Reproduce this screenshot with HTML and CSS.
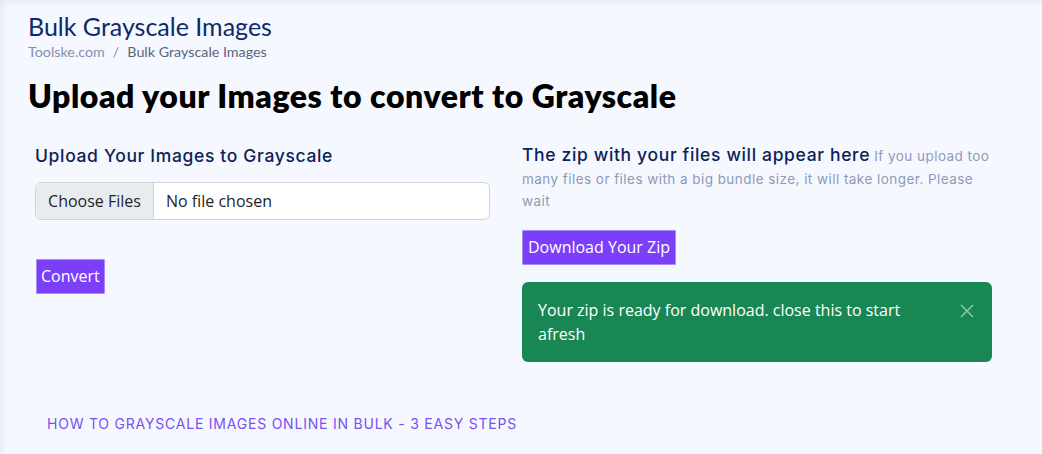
FILE: index.html
```html
<!DOCTYPE html>
<html lang="en">
<head>
<meta charset="utf-8">
<title>Bulk Grayscale Images</title>
<link rel="stylesheet" href="styles.css">
</head>
<body>
<div class="page">
  <header class="page-head">
    <div class="site-title">Bulk Grayscale Images</div>
    <nav class="crumbs"><span class="crumb-link">Toolske.com</span><span class="crumb-sep">/</span><span class="crumb-current">Bulk Grayscale Images</span></nav>
  </header>
  <h1 class="main-title">Upload your Images to convert to Grayscale</h1>
  <div class="tool">
    <section class="col-left">
      <h2 class="sub-title">Upload Your Images to Grayscale</h2>
      <div class="file-input"><span class="file-btn">Choose Files</span><span class="file-name">No file chosen</span></div>
      <button class="btn btn-convert">Convert</button>
    </section>
    <section class="col-right">
      <p class="zip-text"><span class="sub-title inline">The zip with your files will appear here</span> <span class="note">If you upload too many files or files with a big bundle size, it will take longer. Please wait</span></p>
      <button class="btn btn-download">Download Your Zip</button>
      <div class="alert">
        <span class="alert-text">Your zip is ready for download. close this to start afresh</span>
        <svg class="alert-close" width="14" height="14" viewBox="0 0 14 14"><path d="M1 1L13 13M13 1L1 13" stroke="currentColor" stroke-width="1.6" fill="none"/></svg>
      </div>
    </section>
  </div>
  <div class="steps-title">HOW TO GRAYSCALE IMAGES ONLINE IN BULK - 3 EASY STEPS</div>
</div>
</body>
</html>
```
FILE: styles.css
```css
html, body { margin: 0; padding: 0; }
body {
  background: #f5f8ff;
  font-family: "Open Sans", "Noto Sans", sans-serif;
  width: 1042px;
  height: 454px;
  overflow: hidden;
}
.page {
  padding: 11px 0 0 28px;
  box-shadow: inset 6px 6px 10px -6px rgba(120,130,160,0.18);
  height: 454px;
  box-sizing: border-box;
}
.site-title {
  font-family: "Lato", sans-serif;
  font-size: 25px;
  line-height: 30px;
  color: #0d2a6c;
}
.crumbs {
  font-family: "Lato", sans-serif;
  font-size: 14.3px;
  line-height: 20px;
  margin-top: 1px;
  color: #5b6479;
}
.crumb-link { color: #8890ad; }
.crumb-sep { margin: 0 8px; color: #8890ad; }
.main-title {
  font-family: "Lato", sans-serif;
  font-weight: 800;
  font-size: 32px;
  letter-spacing: 0.55px;
  line-height: 38px;
  margin: 15px 0 0 0;
  color: #000;
}
.tool {
  display: grid;
  grid-template-columns: 455px 470px;
  column-gap: 32px;
  margin: 29px 0 0 7px;
}
.sub-title {
  font-family: "Inter", sans-serif;
  font-weight: 500;
  font-size: 17.5px;
  letter-spacing: 0.65px;
  line-height: 24px;
  color: #0b2358;
  margin: 0;
}
.file-input {
  margin-top: 14px;
  display: flex;
  height: 38px;
  box-sizing: border-box;
  border: 1px solid #ced4da;
  border-radius: 6px;
  background: #fff;
  overflow: hidden;
  font-size: 16px;
  color: #212529;
}
.file-btn {
  width: 117px;
  background: #e9ecef;
  border-right: 1px solid #ced4da;
  display: flex;
  align-items: center;
  justify-content: center;
}
.file-name {
  display: flex;
  align-items: center;
  padding-left: 12px;
}
.btn {
  display: block;
  font-family: "Open Sans", sans-serif;
  font-size: 16px;
  color: #fff;
  background: #7b3ff9;
  border: 1px solid #a98af5;
  border-radius: 1px;
  padding: 0 5px;
  height: 35px;
  line-height: 33px;
  cursor: pointer;
}
.btn-convert { margin-top: 39px; padding: 0 4px; margin-left: 1px; }
.zip-text {
  margin: 0;
  line-height: 21.5px;
  color: #8e9ab6;
}
.sub-title.inline { display: inline; line-height: 21.5px; }
.note {
  font-family: "Inter", sans-serif;
  font-size: 13.5px;
  letter-spacing: 0.45px;
}
.btn-download { margin-top: 17px; }
.alert {
  margin-top: 17px;
  background: #198754;
  border-radius: 6px;
  color: #fff;
  display: flex;
  justify-content: space-between;
  align-items: flex-start;
  padding: 16px 18px 16px 16px;
  font-size: 16px;
  line-height: 24px;
}
.alert-text { width: 380px; }
.alert-close { color: #8cc6a8; margin-top: 6px; }
.steps-title {
  font-family: "Inter", sans-serif;
  font-size: 14px;
  letter-spacing: 0.78px;
  color: #7a50ef;
  margin: 53px 0 0 19px;
}
```
